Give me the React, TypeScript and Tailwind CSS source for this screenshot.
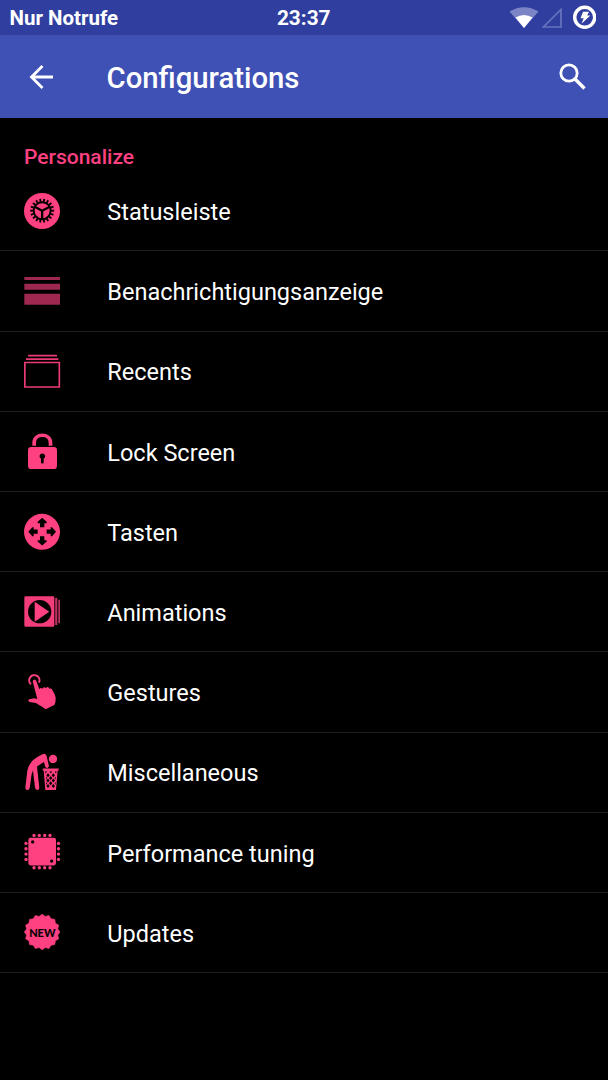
import type { ReactNode } from "react";

const PINK = "#ff4081";

function Icon({ top, children }: { top: number; children: ReactNode }) {
  return (
    <svg className="h-9 w-9 shrink-0 overflow-visible" viewBox={`30 ${top} 108 108`} fill={PINK}>
      {children}
    </svg>
  );
}

const teeth = Array.from({ length: 18 }, (_, i) => i * 20 + 10);

const badge = Array.from({ length: 32 }, (_, i) => {
  const r = i % 2 ? 47.5 : 53.5;
  const a = (i * Math.PI) / 16 - Math.PI / 2;
  return `${84.5 + r * Math.cos(a)},${81 + r * Math.sin(a)}`;
}).join(" ");

const items: { label: string; icon: ReactNode }[] = [
  {
    label: "Statusleiste",
    icon: (
      <Icon top={24}>
        <circle cx="84" cy="78" r="54" />
        <g stroke="#000" fill="none">
          <circle cx="84.500" cy="77" r="25.500" strokeWidth="6" />
          {teeth.map((a) => (
            <path key={a} d="M84.500 50V41" strokeWidth="5.500" transform={`rotate(${a} 84.500 77)`} />
          ))}
          <path d="M84.500 77V102M84.500 77L62 65M84.500 77L107 65" strokeWidth="7" />
        </g>
      </Icon>
    ),
  },
  {
    label: "Benachrichtigungsanzeige",
    icon: (
      <Icon top={24.6}>
        <path opacity="0.62" d="M31 36.500H138V45.500H31ZM31 57H138V75H31ZM31 86.500H138V120H31Z" />
      </Icon>
    ),
  },
  {
    label: "Recents",
    icon: (
      <Icon top={264}>
        <path
          d="M42 272H129M36 282.500H133M32.500 292.500H136V366H32.500Z"
          fill="none"
          stroke={PINK}
          strokeWidth="5"
          opacity="0.92"
        />
      </Icon>
    ),
  },
  {
    label: "Lock Screen",
    icon: (
      <Icon top={24.8}>
        <path d="M60.500 63V54C60.500 24 109.500 24 109.500 54V63" fill="none" stroke={PINK} strokeWidth="11" />
        <rect x="42" y="67" width="87" height="66" rx="10" />
        <path d="M85 86a8.500 8.500 0 0 1 4 16v12q-4 5-8 0v-12a8.500 8.500 0 0 1 4-16Z" fill="#000" />
      </Icon>
    ),
  },
  {
    label: "Tasten",
    icon: (
      <Icon top={26.4}>
        <circle cx="84" cy="80" r="54" />
        {[0, 90, 180, 270].map((a) => (
          <path
            key={a}
            d="M84.500 38L98 50V54H91V66H78V54H71V50Z"
            fill="#000"
            transform={`rotate(${a} 84.500 79.500)`}
          />
        ))}
      </Icon>
    ),
  },
  {
    label: "Animations",
    icon: (
      <Icon top={21}>
        <rect x="31" y="28" width="90" height="91" rx="4" opacity="0.95" />
        <path d="M123.500 33H130V114H123.500ZM133 38H138V109H133Z" opacity="0.75" />
        <circle cx="77" cy="74" r="35" fill="#000" />
        <path d="M62 44L106 74L62 104Z" />
      </Icon>
    ),
  },
  {
    label: "Gestures",
    icon: (
      <Icon top={27}>
        <path
          d="M51 58A15.500 15.500 0 1 1 75 53"
          fill="none"
          stroke={PINK}
          strokeWidth="6"
        />
        <path d="M56 49Q61 38 67 48L76 73Q79 66 85 71Q88 63 96 69Q102 62 107 71Q114 68 116 77Q124 87 125 98Q126 111 121 120L95 133L82 124Q71 118 66 114L46 111Q40 107 45 103L60 100L70 102Z" />
      </Icon>
    ),
  },
  {
    label: "Miscellaneous",
    icon: (
      <Icon top={28.2}>
        <circle cx="117" cy="43" r="12.500" />
        <path d="M34 130L40 78Q42 62 56 48Q70 35 87 28Q96 25 98 35L105 65L100 71L94 67L90 52Q79 59 69 66L76 130Q75 137 69 136Q64 135 63 129L57 78L53 88L47 130Q45 137 39 136Q34 135 34 130Z" />
        <path d="M86 72H134V78H131L126 136H94L89 78H86Z" />
        <g fill="#000">
          <path d="M93 81H99L95 87ZM106 81H115L110.500 86ZM122 81H128L126 87Z" />
          {[92, 108, 124].map((y) => (
            <path key={y} d={`M102 ${y - 6}l5 6-5 6-5-6ZM118 ${y - 6}l5 6-5 6-5-6Z`} />
          ))}
          {[100, 116].map((y) => (
            <path key={y} d={`M110 ${y - 6}l5 6-5 6-5-6ZM96 ${y - 4}l3 4-3 5ZM125 ${y - 4}l-3 4 3 5Z`} />
          ))}
        </g>
      </Icon>
    ),
  },
  {
    label: "Performance tuning",
    icon: (
      <Icon top={28.8}>
        <rect x="43" y="40" width="83" height="83" rx="7" />
        {[60, 76, 92, 108].map((p) => (
          <g key={p}>
            <circle cx={p} cy="33" r="5" />
            <circle cx={p} cy="130" r="5" />
            <circle cx="36" cy={p - 3} r="5" />
            <circle cx="133.500" cy={p - 3} r="5" />
          </g>
        ))}
        <circle cx="56" cy="52.500" r="5" fill="#000" />
        <circle cx="113" cy="110" r="5" fill="#000" />
      </Icon>
    ),
  },
  {
    label: "Updates",
    icon: (
      <Icon top={30}>
        <polygon points={badge} stroke={PINK} strokeWidth="2" strokeLinejoin="round" />
        <text
          x="85"
          y="94.500"
          textAnchor="middle"
          textLength="79"
          lengthAdjust="spacingAndGlyphs"
          fill="#000"
          stroke="#000"
          strokeWidth="0.600"
          className="font-['Lato'] text-[36px] font-bold"
        >
          NEW
        </text>
      </Icon>
    ),
  },
];

export default function App() {
  return (
    <div className="h-[1080px] w-[608px] overflow-hidden bg-black font-['Roboto',sans-serif] text-white">
      <div className="grid h-[35px] grid-cols-3 items-center bg-[#303f9f] pr-2.5 pl-[9.5px] text-[20.8px] leading-none font-bold">
        <span className="pt-0.5 text-[20.5px]">Nur Notrufe</span>
        <span className="pt-0.5 text-center">23:37</span>
        <svg className="mr-0.5 h-[35px] w-[90px] justify-self-end" viewBox="506 0 90 35">
          <path d="M509.500 11.500Q524 3 538.500 11.500L524 28Z" fill="#7c86c6" />
          <path d="M515.500 17.500Q524 12.500 532.500 17.500L524 28Z" fill="#fff" />
          <path d="M561 9.500V27H543.500Z" fill="none" stroke="#6874bd" strokeWidth="1.700" />
          <circle cx="584.700" cy="17.300" r="10" fill="none" stroke="#fff" strokeWidth="3.400" />
          <path d="M583 11.800H589L587.200 15.500H590.300L581.500 23.800L583.700 18.300H580.500Z" fill="#fff" />
        </svg>
      </div>
      <header className="flex h-[83px] items-center bg-[#3f51b5] pr-[21px] pl-[29px]">
        <svg className="h-6 w-6" viewBox="0 0 24 24" fill="none" stroke="#fff" strokeWidth="2.800">
          <path d="M24 12H2.500M13.500 1L2.500 12L13.500 23" />
        </svg>
        <h1 className="ml-[53.5px] flex-1 pt-[4px] text-[29.3px] leading-none font-medium">Configurations</h1>
        <svg className="h-[28px] w-[28px]" viewBox="0 0 28 28" fill="none" stroke="#fff" strokeWidth="2.800">
          <circle cx="10" cy="10" r="8.200" />
          <path d="M16 16L25.500 25.500" strokeWidth="3.400" />
        </svg>
      </header>
      <h2 className="flex h-[53.3px] items-center pt-[25px] text-[21px] leading-none font-medium text-[#ff4081] pl-6">
        Personalize
      </h2>
      <ul>
        {items.map((item) => (
          <li key={item.label} className="flex h-[80.2px] items-center border-b border-[#1f1f1f] pl-6">
            {item.icon}
            <span className="ml-[47.3px] pt-[3.5px] text-[23.5px]">{item.label}</span>
          </li>
        ))}
      </ul>
    </div>
  );
}
